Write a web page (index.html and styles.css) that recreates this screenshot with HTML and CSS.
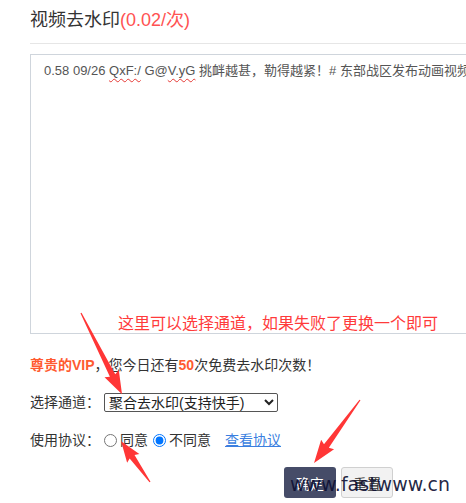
FILE: index.html
```html
<!DOCTYPE html>
<html lang="zh-CN">
<head>
    <meta charset="UTF-8">
    <meta name="viewport" content="width=device-width, initial-scale=1.0">
    <title>视频去水印</title>
    <link rel="stylesheet" href="styles.css">
</head>
<body>

    <div class="page">
        <!-- 标题 -->
        <div class="header">
            <h2>视频去水印<span class="price">(0.02/次)</span></h2>
        </div>

        <!-- 分享链接输入框 -->
        <div class="input-wrap">
            <div class="link-box" contenteditable="true" spellcheck="false">0.58 09/26 <span class="typo">QxF:/</span> G@<span class="typo">V.yG</span> 挑衅越甚，勒得越紧！# 东部战区发布动画视频</div>
            <div class="note">这里可以选择通道，如果失败了更换一个即可</div>
        </div>

        <p class="vip"><b class="hot">尊贵的VIP</b>，您今日还有<b class="hot">50</b>次免费去水印次数！</p>

        <div class="row">
            <label>选择通道：</label>
            <select class="channel">
                <option>聚合去水印(支持快手)</option>
                <option>通道二</option>
            </select>
        </div>

        <div class="row">
            <label>使用协议：</label>
            <input type="radio" name="agree" id="agreeYes">
            <label for="agreeYes" class="opt">同意</label>
            <input type="radio" name="agree" id="agreeNo" checked>
            <label for="agreeNo" class="opt">不同意</label>
            <a href="#" class="terms">查看协议</a>
        </div>

        <div class="actions">
            <button class="btn btn-ok">确定</button>
            <button class="btn btn-reset">重置</button>
        </div>
    </div>

    <!-- 标注箭头 -->
    <svg class="marks" width="466" height="503" viewBox="0 0 466 503">
        <g fill="#ff3636">
            <polygon transform="translate(81 313) rotate(63.2)" points="0,-0.6 70,-3 68,-8 91,0 68,8 70,3 0,0.6"/>
            <polygon transform="translate(360 400) rotate(126.1)" points="0,-0.6 57,-3 55,-8 78,0 55,8 57,3 0,0.6"/>
            <polygon transform="translate(150 482) rotate(234.7)" points="0,-0.6 31,-3 29,-7.5 50,0 29,7.5 31,3 0,0.6"/>
        </g>
    </svg>

    <div class="watermark">www.fastwww.cn</div>

</body>
</html>
```

FILE: styles.css
```css
* {
    margin: 0;
    padding: 0;
    box-sizing: border-box;
}
html, body {
    overflow: hidden;
}
body {
    width: 466px;
    height: 503px;
    position: relative;
    background: #fff;
    color: #333;
    font-family: "Liberation Sans", "Noto Sans CJK SC", sans-serif;
    font-size: 14px;
    line-height: 20px;
}
.page {
    padding: 6px 0 0 30px;
}
.header {
    border-bottom: 1px solid #e6e6e6;
    padding-bottom: 9px;
}
.header h2 {
    font-size: 18px;
    line-height: 28px;
    font-weight: normal;
    color: #333;
}
.price {
    color: #ff5252;
}
.input-wrap {
    position: relative;
    margin-top: 10px;
}
/* 输入框右侧超出截图，故不画右边框 */
.link-box {
    height: 280px;
    border: 1px solid #cfd5dc;
    border-right: none;
    padding: 6px 0 6px 13px;
    color: #555;
    font-size: 13px;
    white-space: nowrap;
    overflow: hidden;
    outline: none;
}
.typo {
    text-decoration: underline wavy #e53935;
    text-decoration-thickness: 1px;
    text-underline-offset: 3px;
}
.note {
    position: absolute;
    left: 88px;
    top: 260px;
    font-size: 16px;
    line-height: 20px;
    color: #ff3b3b;
}
.vip {
    margin-top: 21px;
}
.hot {
    color: #ff5a30;
    font-weight: bold;
}
.row {
    display: flex;
    align-items: center;
    height: 20px;
    margin-top: 17px;
}
.row + .row {
    margin-top: 18px;
}
.channel {
    width: 174px;
    height: 19px;
    margin-left: 4px;
    border: 1px solid #555;
    border-radius: 2px;
    font-family: inherit;
    font-size: 14px;
    color: #222;
    background: #fff;
}
.row input[type="radio"] {
    width: 13px;
    height: 13px;
    margin: 0 3px 0 4px;
}
.opt {
    margin-right: 1px;
}
.terms {
    margin-left: 13px;
    color: #3b7fe0;
    text-decoration: underline;
}
.actions {
    display: flex;
    gap: 5px;
    margin: 17px 0 0 254px;
}
.btn {
    width: 52px;
    height: 31px;
    border-radius: 3px;
    font-family: inherit;
    font-size: 14px;
}
.btn-ok {
    background: #464c68;
    border: none;
    color: #fff;
}
.btn-reset {
    background: #f2f2f2;
    border: 1px solid #d0d0d0;
    color: #333;
}
.marks {
    position: absolute;
    left: 0;
    top: 0;
    pointer-events: none;
}
.watermark {
    position: absolute;
    left: 290px;
    top: 472px;
    font-family: "DejaVu Sans", sans-serif;
    font-size: 19px;
    line-height: 24px;
    color: rgba(14, 16, 52, 0.92);
    pointer-events: none;
}
```
